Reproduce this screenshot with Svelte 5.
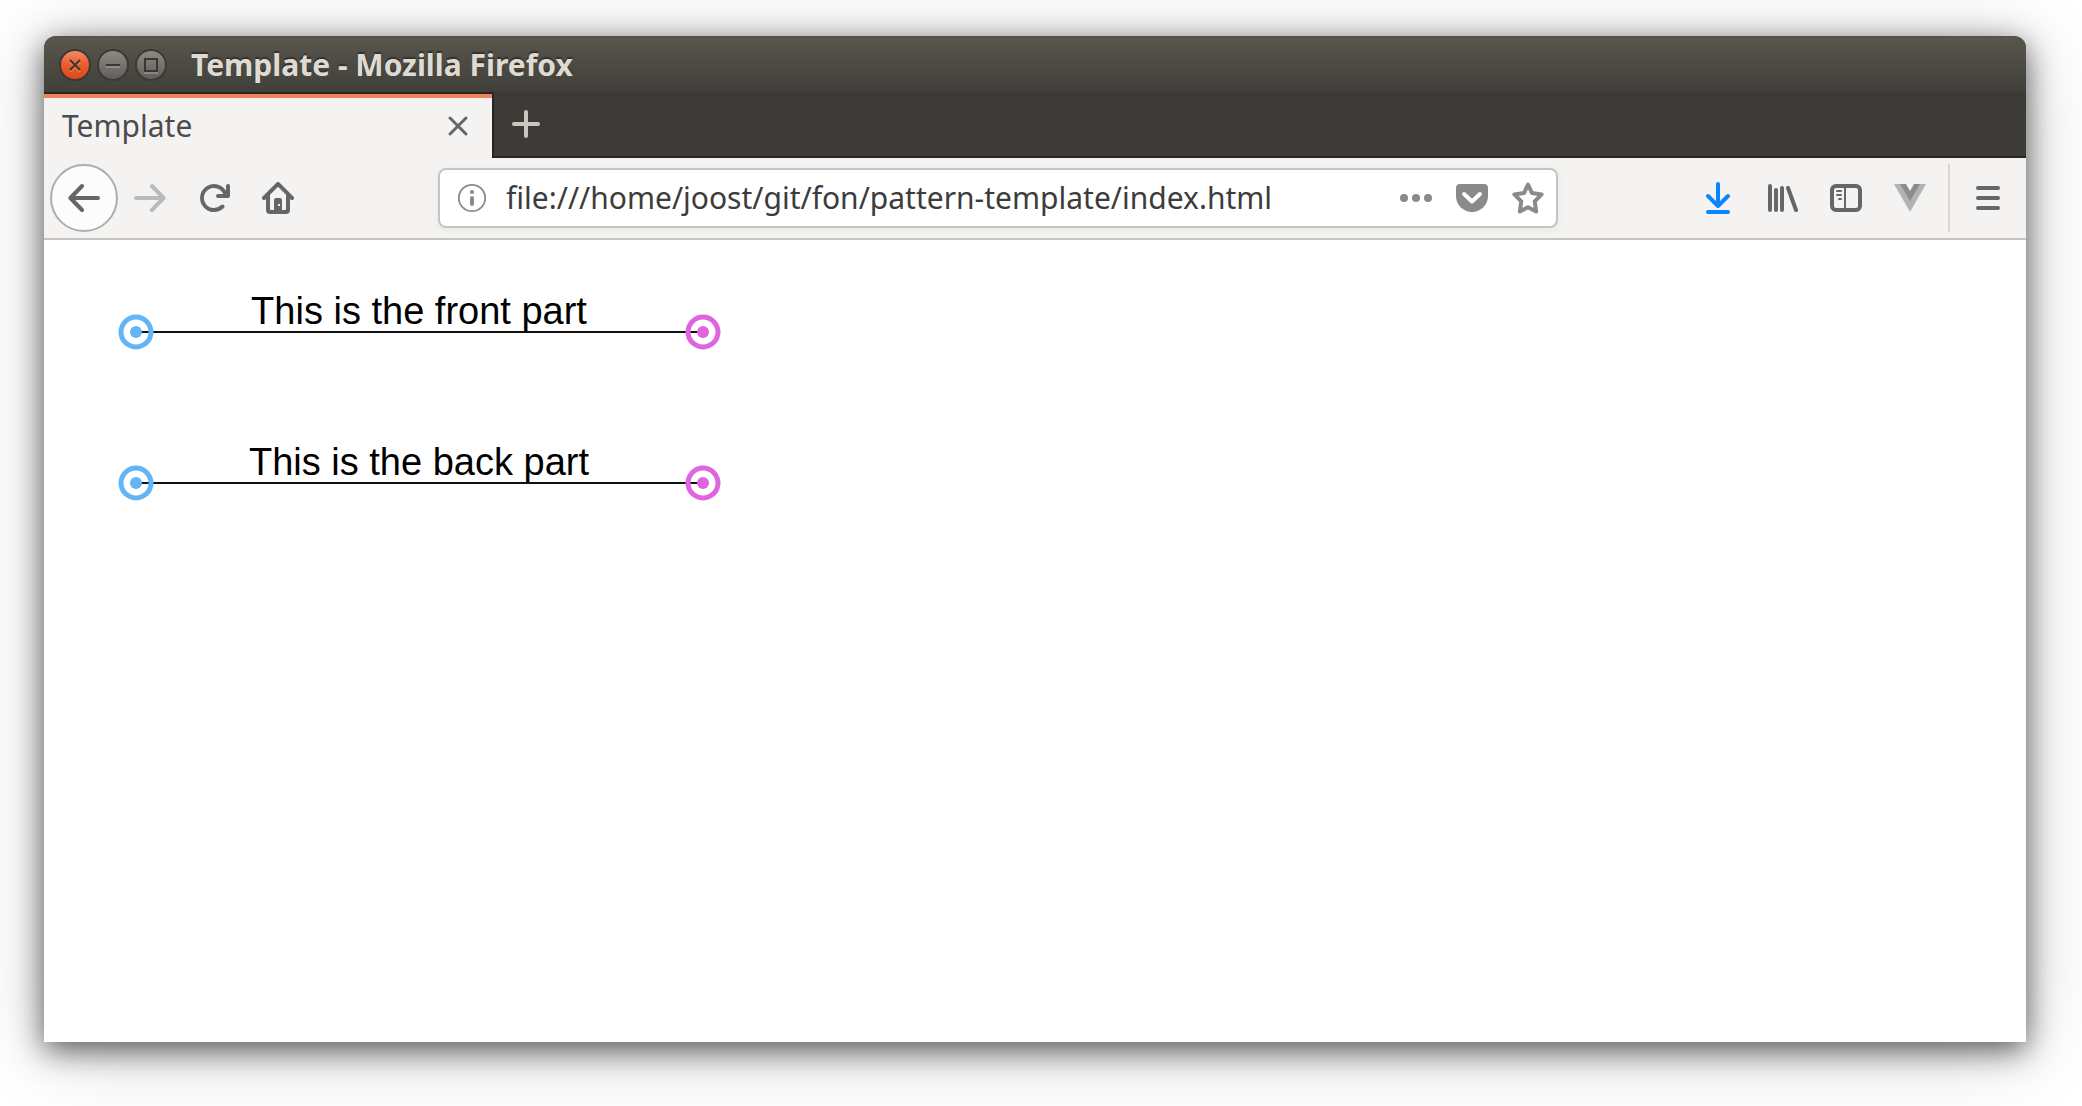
<script>
  let address = $state('file:///home/joost/git/fon/pattern-template/index.html');

  const seams = [
    { label: 'This is the front part', y: 92 },
    { label: 'This is the back part', y: 243 }
  ];
</script>

<div class="desktop">
  <div class="window">
    <header class="titlebar">
      <button class="control close" aria-label="Close window">
        <svg viewBox="0 0 32 32"><path class="glow" d="M11 13l10 10M21 13l-10 10" /><path d="M11 11l10 10M21 11l-10 10" /></svg>
      </button>
      <button class="control" aria-label="Minimize window">
        <svg viewBox="0 0 32 32"><path class="glow" d="M9 18h14" /><path d="M9 16h14" /></svg>
      </button>
      <button class="control" aria-label="Maximize window">
        <svg viewBox="0 0 32 32"><path class="glow" d="M9 24h14" /><path d="M10 10h12v12H10z" /></svg>
      </button>
      <h1>Template - Mozilla Firefox</h1>
    </header>

    <div class="tabs">
      <div class="tab">
        <span>Template</span>
        <button class="plain" aria-label="Close tab">
          <svg class="small" viewBox="0 0 24 24"><path class="line" d="M4 4l16 16M20 4L4 20" /></svg>
        </button>
      </div>
      <button class="plain new-tab" aria-label="New tab">
        <svg viewBox="0 0 32 32"><path d="M16 4v24M4 16h24" /></svg>
      </button>
    </div>

    <nav class="toolbar">
      <button class="plain back" aria-label="Back">
        <svg viewBox="0 0 16 16"><path class="stroke" d="M7 2L1.2 8 7 14M1.5 8H15" /></svg>
      </button>
      <button class="plain forward" aria-label="Forward" disabled>
        <svg viewBox="0 0 16 16"><path class="stroke" d="M9 2l5.8 6L9 14M14.5 8H1" /></svg>
      </button>
      <button class="plain" aria-label="Reload">
        <svg viewBox="0 0 16 16"><path d="M15 1a1 1 0 0 0-1 1v2.418A6.995 6.995 0 1 0 8 15a6.954 6.954 0 0 0 4.95-2.05 1 1 0 0 0-1.414-1.414A5.019 5.019 0 1 1 12.549 6H10a1 1 0 0 0 0 2h5a1 1 0 0 0 1-1V2a1 1 0 0 0-1-1z" /></svg>
      </button>
      <button class="plain" aria-label="Home">
        <svg viewBox="0 0 16 16">
          <path fill-rule="evenodd" d="M15.707 7.293l-7-7a1 1 0 0 0-1.414 0l-7 7a1 1 0 0 0 1.414 1.414L2 8.414V14a2 2 0 0 0 2 2h8a2 2 0 0 0 2-2V8.414l.293.293a1 1 0 0 0 1.414-1.414zM8 2.414l4 4V13.5a.5.5 0 0 1-.5.5H10V9a1 1 0 0 0-1-1H7a1 1 0 0 0-1 1v5H4.5a.5.5 0 0 1-.5-.5V6.414zM8 11h1v1H8z" />
        </svg>
      </button>

      <div class="address">
        <button class="plain" aria-label="Site information">
          <svg viewBox="0 0 32 32"><circle cx="16" cy="16" r="13.2" fill="none" stroke="currentColor" stroke-width="1.8" /><circle cx="16" cy="10" r="2.1" /><rect x="14" y="14" width="4" height="10" rx="2" /></svg>
        </button>
        <input type="text" aria-label="Address" spellcheck="false" bind:value={address} />
        <button class="plain" aria-label="Page actions">
          <svg viewBox="0 0 32 32"><circle cx="4" cy="16" r="4" /><circle cx="16" cy="16" r="4" /><circle cx="28" cy="16" r="4" /></svg>
        </button>
        <button class="plain" aria-label="Save to Pocket">
          <svg viewBox="0 0 32 32"><path d="M4 2h24a4 4 0 0 1 4 4v8a16 16 0 0 1-32 0V6a4 4 0 0 1 4-4z" /><path d="M8 12l8 7.5 8-7.5" fill="none" stroke="#fff" stroke-width="4" stroke-linecap="round" stroke-linejoin="round" /></svg>
        </button>
        <button class="plain" aria-label="Bookmark this page">
          <svg viewBox="0 0 32 32"><path class="star" d="M16 2.5l4 8.6 9.6 1.3-6.9 7 1.5 10.1L16 25.2l-8.2 4.3 1.5-10.1-6.9-7 9.6-1.3z" /></svg>
        </button>
      </div>

      <div class="tools">
        <button class="plain download" aria-label="Downloads">
          <svg viewBox="0 0 32 32"><path class="thick" d="M16 2v22M6 14l10 10 10-10M6 30h20" /></svg>
        </button>
        <button class="plain" aria-label="Library">
          <svg viewBox="0 0 32 32"><path class="thick" d="M4 4v24M10 8v20M16 6v22M22 6l8 22" /></svg>
        </button>
        <button class="plain" aria-label="Sidebars">
          <svg viewBox="0 0 32 32"><rect x="2" y="4" width="28" height="24" rx="4" fill="none" stroke="currentColor" stroke-width="4" /><path d="M14 5h2v22h-2z" /><path d="M7 9h4M7 13h4M9 17h2" fill="none" stroke="currentColor" stroke-width="2" stroke-linecap="round" /></svg>
        </button>
        <button class="plain" aria-label="Vue devtools">
          <svg viewBox="0 0 32 32"><path fill="#b3b3b3" d="M0 2h32L16 30z" /><path fill="#8c8c8c" d="M6 2h20L16 19z" /><path fill="#f4f3f2" d="M12 2h8l-4 7z" /></svg>
        </button>
        <span class="divider"></span>
        <button class="plain" aria-label="Open menu">
          <svg viewBox="0 0 32 32"><path class="thick" d="M6 6h20M6 16h20M6 26h20" /></svg>
        </button>
      </div>
    </nav>

    <main>
      <svg class="pattern" width="740" height="300" viewBox="0 0 740 300">
        {#each seams as seam}
          <g>
            <text x="375" y={seam.y - 8} text-anchor="middle">{seam.label}</text>
            <line x1="92" y1={seam.y} x2="659" y2={seam.y} />
            <g class="start">
              <circle class="ring" cx="92" cy={seam.y} r="15" />
              <circle class="dot" cx="92" cy={seam.y} r="6" />
            </g>
            <g class="end">
              <circle class="ring" cx="659" cy={seam.y} r="15" />
              <circle class="dot" cx="659" cy={seam.y} r="6" />
            </g>
          </g>
        {/each}
      </svg>
    </main>
  </div>
</div>

<style>
  :global(body) {
    margin: 0;
    background: #fff;
  }

  .desktop {
    box-sizing: border-box;
    display: flex;
    min-height: 100vh;
    padding: 36px 56px 64px 44px;
    overflow: hidden;
    font-family: 'Noto Sans', 'Open Sans', sans-serif;
    font-size: 30px;
    line-height: 40px;
  }

  .window {
    flex: 1;
    min-width: 0;
    display: flex;
    flex-direction: column;
    background: #fff;
    border-radius: 12px 12px 0 0;
    box-shadow:
      0 8px 30px rgba(0, 0, 0, 0.6),
      0 8px 80px rgba(0, 0, 0, 0.2);
  }

  button {
    box-sizing: border-box;
    margin: 0;
    padding: 0;
    border: 0;
    background: none;
    font: inherit;
    color: inherit;
  }

  svg {
    display: block;
  }

  .titlebar {
    box-sizing: border-box;
    display: flex;
    align-items: center;
    gap: 6px;
    height: 56px;
    padding: 2px 15px 0;
    border-radius: 12px 12px 0 0;
    background: linear-gradient(#5d5b50, #56544b 10%, #403f3a);
    box-shadow: inset 0 2px #55534a;
  }

  .control {
    width: 32px;
    height: 32px;
    border: 2px solid #3a3935;
    border-radius: 50%;
    background: linear-gradient(#8b8a85, #5f5e59);
  }

  .control.close {
    background: linear-gradient(#f58a68, #ea5b2c 50%, #df4a16);
  }

  .control svg {
    width: 32px;
    height: 32px;
    margin: -2px;
    fill: none;
    stroke: #3a3732;
    stroke-width: 2;
  }

  .control .glow {
    stroke: rgba(255, 255, 255, 0.2);
  }

  h1 {
    margin: 0 0 0 18px;
    font-size: 30px;
    line-height: 40px;
    font-weight: 700;
    color: #dfdbd2;
    text-shadow: 0 -2px 1px #33322e;
  }

  .tabs {
    display: flex;
    height: 66px;
    background: #3c3b37;
    box-shadow: inset 0 -2px #272624;
  }

  .tab {
    box-sizing: border-box;
    display: flex;
    align-items: center;
    justify-content: space-between;
    width: 450px;
    padding: 0 22px 0 18px;
    border-top: 2px solid #272624;
    border-right: 2px solid #272624;
    background: #f4f3f2;
    box-shadow: inset 0 4px #f08159;
    color: #4c4c4c;
  }

  .small {
    width: 24px;
    height: 24px;
  }

  .line {
    fill: none;
    stroke: #666;
    stroke-width: 3;
    stroke-linecap: round;
  }

  .new-tab {
    padding: 0 16px 2px;
  }

  .new-tab svg path {
    stroke: #cbc5bd;
    stroke-width: 4;
    stroke-linecap: round;
  }

  .toolbar {
    box-sizing: border-box;
    display: flex;
    align-items: center;
    gap: 32px;
    height: 82px;
    padding: 0 22px 0 6px;
    border-bottom: 2px solid #c6c4c1;
    background: #f4f3f2;
    color: #666;
  }

  .plain svg {
    fill: currentColor;
  }

  .plain svg:not(.small) {
    width: 32px;
    height: 32px;
  }

  .plain .stroke {
    fill: none;
    stroke: currentColor;
    stroke-width: 2;
    stroke-linecap: round;
    stroke-linejoin: round;
  }

  .plain .thick {
    fill: none;
    stroke: currentColor;
    stroke-width: 4;
    stroke-linecap: round;
    stroke-linejoin: round;
  }

  .back {
    flex-shrink: 0;
    width: 68px;
    height: 68px;
    padding: 0 16px;
    margin-right: -16px;
    border: 2px solid #adadad;
    border-radius: 50%;
    background: #fcfcfc;
  }

  .forward {
    color: #bababa;
  }

  .address {
    box-sizing: border-box;
    flex: 1;
    min-width: 0;
    display: flex;
    align-items: center;
    gap: 24px;
    height: 60px;
    margin: 0 112px;
    padding: 0 12px 0 16px;
    border: 2px solid #c6c4c1;
    border-radius: 8px;
    background: #fff;
    box-shadow: 0 2px 8px rgba(0, 0, 0, 0.05);
    color: #8a8a8a;
  }

  .address input {
    flex: 1;
    min-width: 0;
    height: 40px;
    margin-left: -6px;
    padding: 0;
    border: 0;
    outline: 0;
    background: none;
    font: inherit;
    color: #3c3c3c;
  }

  .star {
    fill: none;
    stroke: currentColor;
    stroke-width: 4;
    stroke-linejoin: round;
  }

  .tools {
    display: flex;
    align-items: center;
    gap: 32px;
  }

  .download {
    color: #0a84ff;
  }

  .divider {
    width: 2px;
    height: 68px;
    margin: 0 -10px;
    background: #d8d7d5;
  }

  main {
    flex: 1;
  }

  .pattern text {
    font-family: 'Liberation Sans', Arial, sans-serif;
    font-size: 38px;
    fill: #000;
  }

  .pattern line {
    stroke: #111;
    stroke-width: 2;
  }

  .start {
    color: #64b5f6;
  }

  .end {
    color: #df64df;
  }

  .ring {
    fill: none;
    stroke: currentColor;
    stroke-width: 5;
  }

  .dot {
    fill: currentColor;
  }
</style>
